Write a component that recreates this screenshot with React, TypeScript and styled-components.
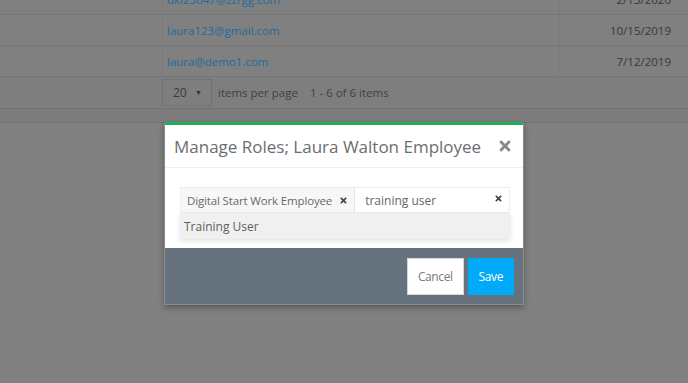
import React from "react";
import styled, { createGlobalStyle } from "styled-components";
import { FaTimes } from "react-icons/fa";

const GlobalStyle = createGlobalStyle`
  html, body { margin: 0; padding: 0; }
  body {
    background: #808080;
    font-family: "Open Sans", "Liberation Sans", sans-serif;
    overflow: hidden;
  }
`;

const Page = styled.div`
  position: relative;
  width: 688px;
  height: 383px;
  overflow: hidden;
  background: #808080;
`;

const Table = styled.div`
  margin-top: -16px;
  display: grid;
  grid-template-columns: 163px 397px 128px;
`;

const Cell = styled.div<{ $align?: "left" | "right"; $last?: boolean }>`
  height: 30px;
  border-bottom: 1px solid #767676;
  border-right: ${(p) => (p.$last ? "none" : "1px solid #7a7a7a")};
  display: flex;
  align-items: center;
  justify-content: ${(p) => (p.$align === "right" ? "flex-end" : "flex-start")};
  padding: ${(p) => (p.$align === "right" ? "0 17px 0 0" : "0 0 0 4px")};
  font-size: 11.5px;
  box-sizing: content-box;
`;

const Email = styled.span`
  color: #236a9c;
`;

const DateText = styled.span`
  color: #383838;
`;

const Pager = styled.div`
  height: 31px;
  background: #7e7e7e;
  border-bottom: 1px solid #727272;
  display: flex;
  align-items: center;
  padding-left: 162px;
  gap: 6px;
  font-size: 11.5px;
  color: #3f3f3f;
`;

const PageSize = styled.div`
  width: 50px;
  height: 27px;
  border: 1px solid #727272;
  display: flex;
  align-items: center;
  justify-content: space-between;
  padding: 0 9px 0 10px;
  box-sizing: border-box;
  font-size: 12px;
  color: #3a3a3a;
`;

const Caret = styled.span`
  font-size: 7px;
  color: #2e2e2e;
`;

const PagerInfo = styled.span`
  margin-left: 6px;
`;

const Band = styled.div`
  height: 13px;
  background: #7c7c7c;
  border-bottom: 1px solid #747474;
`;

const Modal = styled.div`
  position: absolute;
  left: 164px;
  top: 122px;
  width: 360px;
  box-sizing: border-box;
  background: #fff;
  border-top: 3px solid #1db058;
  border-left: 1px solid #8a8a8a;
  border-right: 1px solid #8a8a8a;
  border-bottom: 1px solid #8a8a8a;
  box-shadow: 0 3px 6px rgba(0, 0, 0, 0.3);
`;

const Header = styled.div`
  height: 42px;
  border-bottom: 1px solid #efefef;
  display: flex;
  align-items: center;
  justify-content: space-between;
  padding: 0 10px 0 9px;
`;

const Title = styled.h2`
  margin: 0;
  font-size: 17px;
  font-weight: 400;
  color: #6a6e72;
`;

const CloseBtn = styled.span`
  display: flex;
  color: #8a8a8a;
  font-size: 16px;
  margin-top: -1px;
`;

const Body = styled.div`
  position: relative;
  padding: 19px 13px 35px 15px;
`;

const TagInput = styled.div`
  height: 26px;
  border: 1px solid #eeeeee;
  box-sizing: border-box;
  display: flex;
  align-items: stretch;
`;

const Chip = styled.div`
  display: flex;
  align-items: center;
  gap: 7px;
  padding: 0 6px 0 6px;
  background: #f7f7f7;
  border-right: 1px solid #e8e8e8;
  font-size: 11.5px;
  letter-spacing: -0.15px;
  color: #6a6a6a;
`;

const ChipClose = styled.span`
  display: flex;
  color: #444;
  font-size: 9px;
`;

const SearchText = styled.div`
  flex: 1;
  display: flex;
  align-items: center;
  justify-content: space-between;
  padding: 0 6px 0 10px;
  font-size: 12px;
  color: #666;
`;

const ClearX = styled.span`
  display: flex;
  color: #444;
  font-size: 9px;
  margin-top: -3px;
`;

const Popup = styled.div`
  position: absolute;
  left: 15px;
  right: 13px;
  top: 45px;
  height: 26px;
  background: #f0f0f0;
  box-shadow: 0 2px 5px rgba(0, 0, 0, 0.12);
  display: flex;
  align-items: center;
  padding-left: 4px;
  font-size: 12px;
  color: #5e5e5e;
`;

const Footer = styled.div`
  height: 56px;
  background: #66727e;
  display: flex;
  align-items: center;
  justify-content: flex-end;
  gap: 4px;
  padding: 0 9px;
`;

const Button = styled.button<{ $primary?: boolean }>`
  height: 37px;
  padding: 0 ${(p) => (p.$primary ? "10px" : "10px")};
  border: 1px solid ${(p) => (p.$primary ? "#00aaf6" : "#d6d6d6")};
  background: ${(p) => (p.$primary ? "#00aaf6" : "#ffffff")};
  color: ${(p) => (p.$primary ? "#ffffff" : "#7a7a7a")};
  font-family: "Open Sans", "Liberation Sans", sans-serif;
  font-size: 12px;
  letter-spacing: -0.4px;
  cursor: pointer;
`;

const rows = [
  { email: "dki23047@zzrgg.com", date: "2/13/2020" },
  { email: "laura123@gmail.com", date: "10/15/2019" },
  { email: "laura@demo1.com", date: "7/12/2019" },
];

export default function App() {
  return (
    <Page>
      <GlobalStyle />
      <Table>
        {rows.map((r) => (
          <React.Fragment key={r.email}>
            <Cell />
            <Cell>
              <Email>{r.email}</Email>
            </Cell>
            <Cell $align="right" $last>
              <DateText>{r.date}</DateText>
            </Cell>
          </React.Fragment>
        ))}
      </Table>
      <Pager>
        <PageSize>
          20 <Caret>▼</Caret>
        </PageSize>
        <span>items per page</span>
        <PagerInfo>1 - 6 of 6 items</PagerInfo>
      </Pager>
      <Band />

      <Modal>
        <Header>
          <Title>Manage Roles; Laura Walton Employee</Title>
          <CloseBtn>
            <FaTimes />
          </CloseBtn>
        </Header>
        <Body>
          <TagInput>
            <Chip>
              Digital Start Work Employee
              <ChipClose>
                <FaTimes />
              </ChipClose>
            </Chip>
            <SearchText>
              training user
              <ClearX>
                <FaTimes />
              </ClearX>
            </SearchText>
          </TagInput>
          <Popup>Training User</Popup>
        </Body>
        <Footer>
          <Button>Cancel</Button>
          <Button $primary>Save</Button>
        </Footer>
      </Modal>
    </Page>
  );
}
